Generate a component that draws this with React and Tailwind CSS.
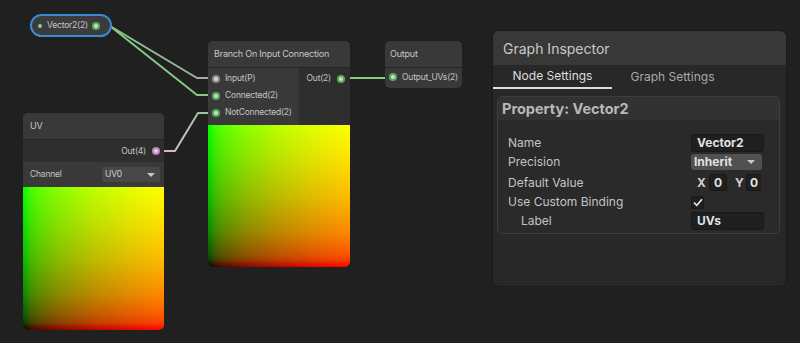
import React from 'react'

const GREEN = '#84cc84'

function Port({ color = 'green' }) {
  const outer = color === 'green' ? 'bg-[#5fa85f]' : color === 'pink' ? 'bg-[#b886b8]' : 'bg-[#8c8c8c]'
  const inner = color === 'green' ? 'bg-[#b8ecb8]' : color === 'pink' ? 'bg-[#f0cdf0]' : 'bg-[#d8d8d8]'
  return (
    <span className={`flex h-[8px] w-[8px] shrink-0 items-center justify-center rounded-full ${outer}`}>
      <span className={`h-[4px] w-[4px] rounded-full ${inner}`} />
    </span>
  )
}

function Preview({ className }) {
  return (
    <div
      className={`bg-[linear-gradient(to_right,#000_0%,#3f0000_5%,#590000_10%,#890000_25%,#bc0000_50%,#e10000_75%,#ff0000_100%),linear-gradient(to_top,#000_0%,#003f00_5%,#005900_10%,#008900_25%,#00bc00_50%,#00e100_75%,#00ff00_100%)] bg-blend-screen ${className}`}
    />
  )
}

function Wires() {
  return (
    <svg className="pointer-events-none absolute left-0 top-0" width="800" height="343">
      <defs>
        <linearGradient id="g1" gradientUnits="userSpaceOnUse" x1="110" y1="0" x2="214" y2="0">
          <stop offset="0" stopColor={GREEN} />
          <stop offset="1" stopColor="#a9a9a9" />
        </linearGradient>
        <linearGradient id="g3" gradientUnits="userSpaceOnUse" x1="156" y1="0" x2="214" y2="0">
          <stop offset="0" stopColor="#d6b0d6" />
          <stop offset="0.4" stopColor="#d0b8d0" />
          <stop offset="1" stopColor={GREEN} />
        </linearGradient>
      </defs>
      <g fill="none" strokeWidth="2" strokeLinejoin="round">
        <path d="M96 26 L110 26 L197 78 L214 78" stroke="url(#g1)" />
        <path d="M96 26 L110 26 L197 95 L214 95" stroke={GREEN} />
        <path d="M156 151 L175 151 L198 113 L214 113" stroke="url(#g3)" />
        <path d="M341 78 L393 78" stroke={GREEN} />
      </g>
    </svg>
  )
}

function Row({ label, children, h, indent }) {
  return (
    <div className={`flex items-center ${h}`}>
      <span className={`w-[193px] ${indent ? 'pl-[23px]' : 'pl-[10px]'} text-[12px] text-[#c4c4c4]`}>{label}</span>
      {children}
    </div>
  )
}

function Inspector() {
  return (
    <div className="absolute left-[493px] top-[31px] h-[255px] w-[293px] overflow-hidden rounded-[6px] bg-[#282828] shadow-[0_0_0_1px_#1a1a1a]">
      <div className="flex h-[34px] items-center bg-[#383838] pl-[10px] text-[14px] text-[#c8c8c8]">
        Graph Inspector
      </div>
      <div className="flex h-[24px] text-[12px]">
        <div className="flex w-[119px] items-center justify-center border-b-2 border-[#dcdcdc] text-[#dedede]">
          Node Settings
        </div>
        <div className="flex w-[121px] items-center justify-center text-[#a9a9a9]">Graph Settings</div>
      </div>
      <div className="ml-[4px] mt-[7px] w-[283px] overflow-hidden rounded-[5px] border border-[#3e3e3e] bg-[#2a2a2a]">
        <div className="flex h-[23px] items-center bg-[#323232] pl-[4px] text-[14.5px] font-bold text-[#b9b9b9]">
          Property: Vector2
        </div>
        <div className="pt-[13px]">
          <Row label="Name" h="h-[19px]">
            <div className="flex h-[18px] w-[73px] items-center rounded-[3px] border border-[#181818] bg-[#1f1f1f] pl-[5px] text-[12px] font-bold text-[#e2e2e2]">
              Vector2
            </div>
          </Row>
          <Row label="Precision" h="h-[20px]">
            <div className="flex h-[16px] w-[71px] items-center justify-between rounded-[3px] bg-[#515151] pl-[3px] pr-[7px] text-[12px] font-bold text-[#e2e2e2]">
              Inherit
              <span className="h-0 w-0 border-x-[4px] border-t-[4px] border-x-transparent border-t-[#c8c8c8]" />
            </div>
          </Row>
          <Row label="Default Value" h="h-[21px]">
            <div className="flex items-center text-[12px] font-bold text-[#d0d0d0]">
              <span className="ml-[6px] w-[12px]">X</span>
              <div className="flex h-[17px] w-[18px] items-center justify-center rounded-[3px] border border-[#181818] bg-[#1f1f1f] text-[#e2e2e2]">
                0
              </div>
              <span className="ml-[8px] w-[11px]">Y</span>
              <div className="flex h-[17px] w-[15px] items-center justify-center rounded-l-[3px] border border-r-0 border-[#181818] bg-[#1f1f1f] text-[#e2e2e2]">
                0
              </div>
            </div>
          </Row>
          <Row label="Use Custom Binding" h="h-[18px]">
            <div className="flex h-[13px] w-[13px] items-center justify-center rounded-[2px] border border-[#181818] bg-[#1f1f1f]">
              <svg width="10" height="9" viewBox="0 0 10 9">
                <path d="M1 4.6 L3.8 7.3 L9 1.3" fill="none" stroke="#e8e8e8" strokeWidth="1.6" />
              </svg>
            </div>
          </Row>
          <Row label="Label" h="h-[20px]" indent>
            <div className="flex h-[18px] w-[73px] items-center rounded-[3px] border border-[#181818] bg-[#1f1f1f] pl-[5px] text-[12px] font-bold text-[#e2e2e2]">
              UVs
            </div>
          </Row>
          <div className="h-[2px]" />
        </div>
      </div>
    </div>
  )
}

export default function App() {
  return (
    <div className="relative h-[343px] w-[800px] overflow-hidden bg-[#202020] font-['Inter','Liberation_Sans',sans-serif] text-[#c4c4c4]">
      <Wires />

      {/* Vector2 property node */}
      <div className="absolute left-[30px] top-[14px] flex h-[23px] w-[82px] items-center rounded-[12px] border-2 border-[#3a8bd2] bg-[#3b3b3b]">
        <span className="ml-[6px] h-[4px] w-[4px] rounded-full bg-[#7fd67f]" />
        <span className="ml-[5px] text-[8.5px] tracking-[-0.2px] text-[#c8c8c8]">Vector2(2)</span>
        <span className="ml-[4px]">
          <Port />
        </span>
      </div>

      {/* Branch node */}
      <div className="absolute left-[208px] top-[41px] w-[142px] overflow-hidden rounded-[5px] bg-[#2e2e2e]">
        <div className="flex h-[26px] items-center bg-[#393939] pl-[6px] text-[9px] tracking-[-0.2px] text-[#c8c8c8]">
          Branch On Input Connection
        </div>
        <div className="flex border-t border-[#252525]">
          <div className="w-[91px] bg-[#393939] pb-[4px] pt-[2px]">
            {[
              ['Input(P)', 'grey'],
              ['Connected(2)', 'green'],
              ['NotConnected(2)', 'green'],
            ].map(([l, c]) => (
              <div key={l} className="flex h-[17px] items-center gap-[5px] pl-[4px] text-[8.5px] tracking-[-0.2px]">
                <Port color={c} />
                {l}
              </div>
            ))}
          </div>
          <div className="flex-1 pt-[2px]">
            <div className="flex h-[17px] items-center justify-end gap-[6px] pr-[5px] text-[8.5px] tracking-[-0.2px]">
              Out(2)
              <Port />
            </div>
          </div>
        </div>
        <Preview className="h-[142px] w-full rounded-b-[5px]" />
      </div>

      {/* Output node */}
      <div className="absolute left-[385px] top-[41px] w-[77px] overflow-hidden rounded-[5px] bg-[#393939]">
        <div className="flex h-[26px] items-center pl-[5px] text-[9px] tracking-[-0.2px] text-[#c8c8c8]">Output</div>
        <div className="flex h-[21px] items-center gap-[5px] border-t border-[#252525] pb-[2px] pl-[4px] text-[8.5px] tracking-[-0.2px]">
          <Port />
          Output_UVs(2)
        </div>
      </div>

      {/* UV node */}
      <div className="absolute left-[23px] top-[113px] w-[141px] overflow-hidden rounded-[5px] bg-[#2e2e2e]">
        <div className="flex h-[26px] items-center bg-[#393939] pl-[7px] text-[9px] tracking-[-0.2px] text-[#c8c8c8]">UV</div>
        <div className="flex h-[23px] items-center justify-end gap-[6px] border-t border-[#252525] pr-[4px] text-[8.5px] tracking-[-0.2px]">
          Out(4)
          <Port color="pink" />
        </div>
        <div className="flex h-[25px] items-center justify-between bg-[#393939] pl-[7px] pr-[4px] text-[8.5px] tracking-[-0.2px]">
          Channel
          <div className="flex h-[15px] w-[58px] items-center justify-between rounded-[2px] bg-[#474747] pl-[3px] pr-[5px] text-[#d0d0d0]">
            UV0
            <span className="h-0 w-0 border-x-[4px] border-t-[4px] border-x-transparent border-t-[#c8c8c8]" />
          </div>
        </div>
        <Preview className="h-[143px] w-full rounded-b-[5px]" />
      </div>

      <Inspector />
    </div>
  )
}
